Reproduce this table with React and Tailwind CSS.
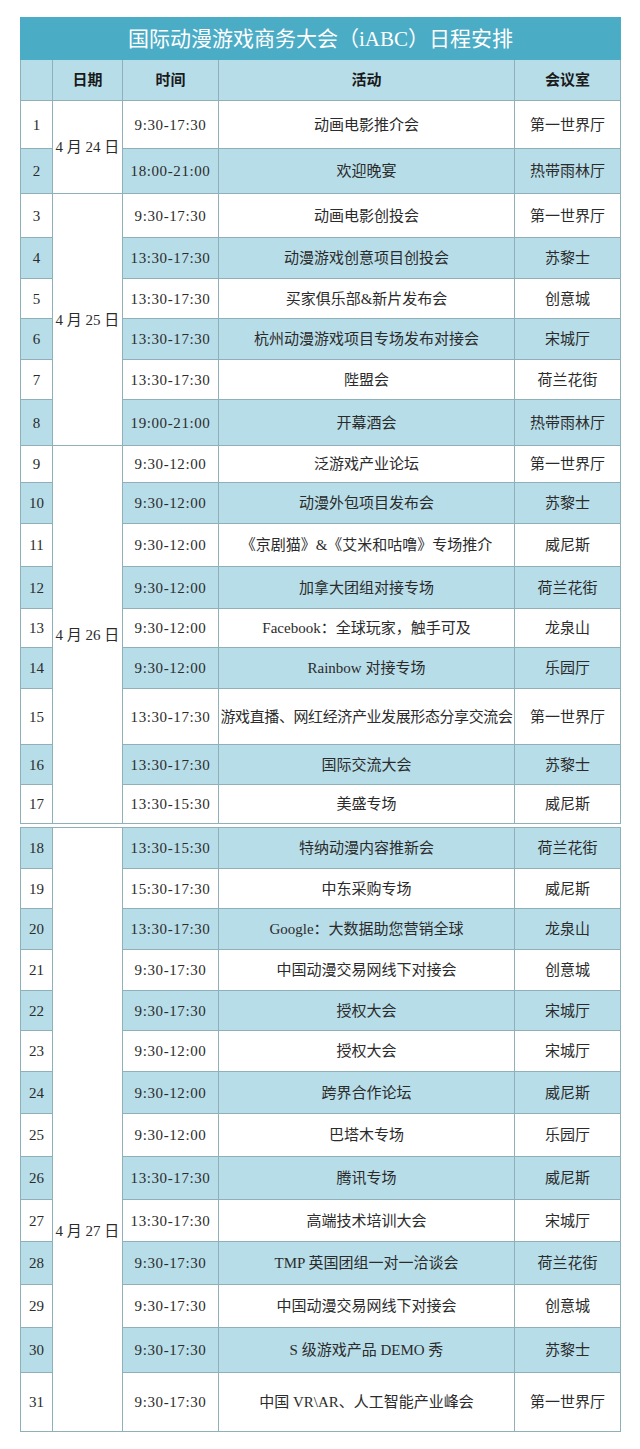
import React from 'react';

const part1 = [
  { n: 1, time: '9:30-17:30', act: '动画电影推介会', room: '第一世界厅', h: 48, date: '4 月 24 日', span: 2 },
  { n: 2, time: '18:00-21:00', act: '欢迎晚宴', room: '热带雨林厅', h: 45 },
  { n: 3, time: '9:30-17:30', act: '动画电影创投会', room: '第一世界厅', h: 44, date: '4 月 25 日', span: 6 },
  { n: 4, time: '13:30-17:30', act: '动漫游戏创意项目创投会', room: '苏黎士', h: 41 },
  { n: 5, time: '13:30-17:30', act: '买家俱乐部&新片发布会', room: '创意城', h: 40 },
  { n: 6, time: '13:30-17:30', act: '杭州动漫游戏项目专场发布对接会', room: '宋城厅', h: 41 },
  { n: 7, time: '13:30-17:30', act: '陛盟会', room: '荷兰花街', h: 40 },
  { n: 8, time: '19:00-21:00', act: '开幕酒会', room: '热带雨林厅', h: 46 },
  { n: 9, time: '9:30-12:00', act: '泛游戏产业论坛', room: '第一世界厅', h: 37, date: '4 月 26 日', span: 9 },
  { n: 10, time: '9:30-12:00', act: '动漫外包项目发布会', room: '苏黎士', h: 41 },
  { n: 11, time: '9:30-12:00', act: '《京剧猫》&《艾米和咕噜》专场推介', room: '威尼斯', h: 43 },
  { n: 12, time: '9:30-12:00', act: '加拿大团组对接专场', room: '荷兰花街', h: 42 },
  { n: 13, time: '9:30-12:00', act: 'Facebook：全球玩家，触手可及', room: '龙泉山', h: 39 },
  { n: 14, time: '9:30-12:00', act: 'Rainbow 对接专场', room: '乐园厅', h: 41 },
  { n: 15, time: '13:30-17:30', act: '游戏直播、网红经济产业发展形态分享交流会', room: '第一世界厅', h: 56, tight: true },
  { n: 16, time: '13:30-17:30', act: '国际交流大会', room: '苏黎士', h: 40 },
  { n: 17, time: '13:30-15:30', act: '美盛专场', room: '威尼斯', h: 39 },
];

const part2 = [
  { n: 18, time: '13:30-15:30', act: '特纳动漫内容推新会', room: '荷兰花街', h: 41, date: '4 月 27 日', span: 14 },
  { n: 19, time: '15:30-17:30', act: '中东采购专场', room: '威尼斯', h: 40 },
  { n: 20, time: '13:30-17:30', act: 'Google：大数据助您营销全球', room: '龙泉山', h: 41 },
  { n: 21, time: '9:30-17:30', act: '中国动漫交易网线下对接会', room: '创意城', h: 41 },
  { n: 22, time: '9:30-17:30', act: '授权大会', room: '宋城厅', h: 40 },
  { n: 23, time: '9:30-12:00', act: '授权大会', room: '宋城厅', h: 41 },
  { n: 24, time: '9:30-12:00', act: '跨界合作论坛', room: '威尼斯', h: 42 },
  { n: 25, time: '9:30-12:00', act: '巴塔木专场', room: '乐园厅', h: 43 },
  { n: 26, time: '13:30-17:30', act: '腾讯专场', room: '威尼斯', h: 43 },
  { n: 27, time: '13:30-17:30', act: '高端技术培训大会', room: '宋城厅', h: 42 },
  { n: 28, time: '9:30-17:30', act: 'TMP 英国团组一对一洽谈会', room: '荷兰花街', h: 43 },
  { n: 29, time: '9:30-17:30', act: '中国动漫交易网线下对接会', room: '创意城', h: 43 },
  { n: 30, time: '9:30-17:30', act: 'S 级游戏产品 DEMO 秀', room: '苏黎士', h: 45 },
  { n: 31, time: '9:30-17:30', act: '中国 VR\\AR、人工智能产业峰会', room: '第一世界厅', h: 59 },
];

const cell = 'border border-[#8fb0b8] text-center align-middle p-0';

const Cols = () => (
  <colgroup>
    <col className="w-[32px]" />
    <col className="w-[70px]" />
    <col className="w-[96px]" />
    <col className="w-[296px]" />
    <col className="w-[106px]" />
  </colgroup>
);

const Row = ({ r, lastDate }) => {
  const bg = r.n % 2 === 0 ? 'bg-[#b7dde8]' : 'bg-white';
  return (
    <tr>
      <td className={`${cell} ${bg}`} style={{ height: r.h }}>
        {r.n}
      </td>
      {r.date && (
        <td
          rowSpan={r.span}
          className={`${cell} bg-white whitespace-nowrap ${lastDate ? '!align-bottom pb-[190px]' : ''}`}
        >
          {r.date}
        </td>
      )}
      <td className={`${cell} ${bg} tracking-[0.6px] whitespace-nowrap`}>{r.time}</td>
      <td className={`${cell} ${bg} whitespace-nowrap ${r.tight ? 'tracking-[-0.4px]' : ''}`}>{r.act}</td>
      <td className={`${cell} ${bg} whitespace-nowrap`}>{r.room}</td>
    </tr>
  );
};

export default function App() {
  return (
    <div
      className="min-h-[1449px] w-[640px] bg-white pl-[20px] pt-[17px] text-[15px] leading-5 text-[#2b2b2b]"
      style={{ fontFamily: '"Liberation Serif", "Noto Sans CJK SC", serif' }}
    >
      <table className="w-[600px] table-fixed border-collapse">
        <Cols />
        <thead>
          <tr>
            <td colSpan={5} className="h-[42px] border border-[#4bacc6] bg-[#4bacc6] text-center align-middle text-[21px] text-white">
              国际动漫游戏商务大会（iABC）日程安排
            </td>
          </tr>
          <tr className="font-bold text-[#1a1a1a]">
            <td className={`${cell} h-[41px] bg-[#b7dde8]`}></td>
            <td className={`${cell} bg-[#b7dde8]`}>日期</td>
            <td className={`${cell} bg-[#b7dde8]`}>时间</td>
            <td className={`${cell} bg-[#b7dde8]`}>活动</td>
            <td className={`${cell} bg-[#b7dde8]`}>会议室</td>
          </tr>
        </thead>
        <tbody>
          {part1.map((r) => (
            <Row key={r.n} r={r} />
          ))}
        </tbody>
      </table>

      <table className="mt-[3px] w-[600px] table-fixed border-collapse">
        <Cols />
        <tbody>
          {part2.map((r) => (
            <Row key={r.n} r={r} lastDate />
          ))}
        </tbody>
      </table>
    </div>
  );
}
